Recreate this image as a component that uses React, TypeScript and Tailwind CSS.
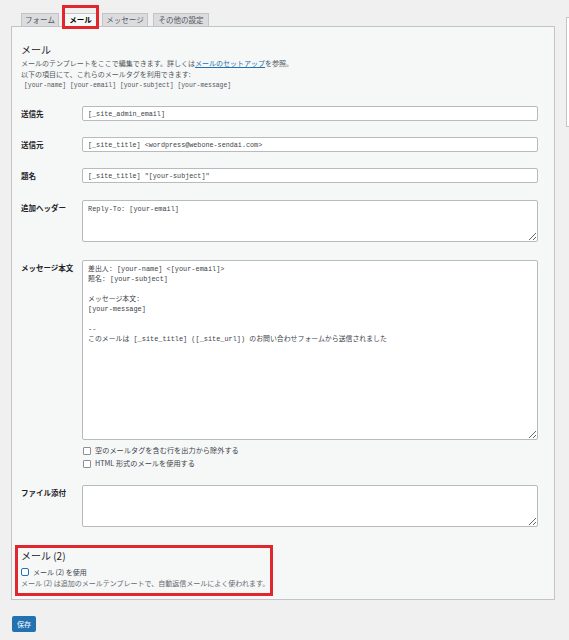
import React from "react";

const TABS = [
  { label: "フォーム", w: "w-[38px]", ml: "ml-0" },
  { label: "メール", w: "w-[35px]", ml: "ml-[4px]", active: true },
  { label: "メッセージ", w: "w-[46px]", ml: "ml-[4px]" },
  { label: "その他の設定", w: "w-[56px]", ml: "ml-[5px]" },
];

const BODY = `差出人: [your-name] <[your-email]>
題名: [your-subject]

メッセージ本文:
[your-message]

--
このメールは [_site_title] ([_site_url]) のお問い合わせフォームから送信されました`;

function Label({ children }: { children: React.ReactNode }) {
  return (
    <div className="w-[61px] shrink-0 pt-[3px] text-[7.5px] leading-[10px] font-bold text-[#1d2327]">
      {children}
    </div>
  );
}

function TextInput({ value }: { value: string }) {
  return (
    <input
      readOnly
      defaultValue={value}
      className="block w-[456px] h-[15px] px-[5px] bg-white border border-[#b8babd] rounded-[2px] font-['Liberation_Mono','Noto_Sans_CJK_JP',monospace] text-[6.75px] text-[#3c434a] outline-none"
    />
  );
}

function Area({ value, h }: { value: string; h: string }) {
  return (
    <textarea
      readOnly
      defaultValue={value}
      className={`block w-[456px] ${h} px-[5px] py-[3px] bg-white border border-[#b8babd] rounded-[2px] font-['Liberation_Mono','Noto_Sans_CJK_JP',monospace] text-[6.9px] leading-[10px] text-[#3c434a] outline-none`}
    />
  );
}

function Check({ label }: { label: string }) {
  return (
    <div className="flex items-center h-[13px] ml-[1px]">
      <span className="w-[8px] h-[8px] bg-white border border-[#8c8f94] rounded-[1px]" />
      <span className="ml-[4px] text-[7.2px] text-[#3c434a]">{label}</span>
    </div>
  );
}

export default function App() {
  return (
    <div className="w-[569px] h-[640px] bg-[#f0f0f1] overflow-hidden flex font-['Noto_Sans_CJK_JP','Liberation_Sans',sans-serif]">
      <div className="w-[555px] shrink-0 pl-[11px]">
        {/* tabs */}
        <div className="flex items-end pt-[13px] pl-[10px] -mb-px">
          {TABS.map((t) => (
            <div
              key={t.label}
              className={`relative ${t.w} ${t.ml} h-[14px] flex items-center justify-center border text-[7.5px] ${
                t.active
                  ? "bg-[#f6f7f7] border-[#c3c4c7] border-b-[#f6f7f7] text-[#000] font-bold z-10"
                  : "bg-[#dcdcde] border-[#c3c4c7] text-[#50575e]"
              }`}
            >
              {t.label}
              {t.active && (
                <span className="absolute -top-[9px] -left-[2px] -right-[2px] -bottom-[3px] border-[3px] border-[#e1262d]" />
              )}
            </div>
          ))}
        </div>

        {/* panel */}
        <div className="w-[544px] h-[574px] border border-[#c3c4c7] bg-[#f6f7f7] pl-[9px]">
          <h2 className="mt-[17px] text-[10px] leading-[12px] text-[#1d2327]">メール</h2>
          <p className="mt-[2px] text-[7px] leading-[11px] text-[#50575e]">
            メールのテンプレートをここで編集できます。詳しくは
            <span className="text-[#2271b1] underline">メールのセットアップ</span>
            を参照。
            <br />
            以下の項目にて、これらのメールタグを利用できます:
          </p>
          <div className="ml-[3px] font-['Liberation_Mono',monospace] text-[6.4px] leading-[11px] text-[#50575e]">
            [your-name] [your-email] [your-subject] [your-message]
          </div>

          <div className="flex mt-[15px]">
            <Label>送信先</Label>
            <TextInput value="[_site_admin_email]" />
          </div>
          <div className="flex mt-[16px]">
            <Label>送信元</Label>
            <TextInput value="[_site_title] <wordpress@webone-sendai.com>" />
          </div>
          <div className="flex mt-[16px]">
            <Label>題名</Label>
            <TextInput value={'[_site_title] "[your-subject]"'} />
          </div>
          <div className="flex mt-[17px]">
            <Label>追加ヘッダー</Label>
            <Area value="Reply-To: [your-email]" h="h-[42px]" />
          </div>
          <div className="flex mt-[18px]">
            <Label>メッセージ本文</Label>
            <div>
              <Area value={BODY} h="h-[180px]" />
              <div className="mt-[4px]">
                <Check label="空のメールタグを含む行を出力から除外する" />
                <Check label="HTML 形式のメールを使用する" />
              </div>
            </div>
          </div>
          <div className="flex mt-[15px]">
            <Label>ファイル添付</Label>
            <Area value="" h="h-[42px]" />
          </div>

          {/* mail (2) */}
          <div className="mt-[18px] -ml-[6px] w-[258px] h-[51px] border-[3px] border-[#e1262d] pl-[3px] pt-[2px]">
            <h3 className="text-[10px] leading-[12px] text-[#1d2327]">メール (2)</h3>
            <div className="mt-[5px] flex items-center h-[10px]">
              <span className="w-[8px] h-[8px] bg-white border border-[#2271b1] rounded-[2px]" />
              <span className="ml-[4px] text-[7px] text-[#3c434a]">メール (2) を使用</span>
            </div>
            <p className="mt-[1px] text-[7px] leading-[10px] text-[#646970]">
              メール (2) は追加のメールテンプレートで、自動返信メールによく使われます。
            </p>
          </div>
        </div>

        <button className="mt-[16px] ml-[1px] w-[24px] h-[16px] bg-[#2271b1] rounded-[2px] text-white text-[7px] flex items-center justify-center">
          保存
        </button>
      </div>

      <div className="ml-[11px] mt-[17px] w-[200px] h-[110px] shrink-0 border border-[#c3c4c7] bg-white" />
    </div>
  );
}
